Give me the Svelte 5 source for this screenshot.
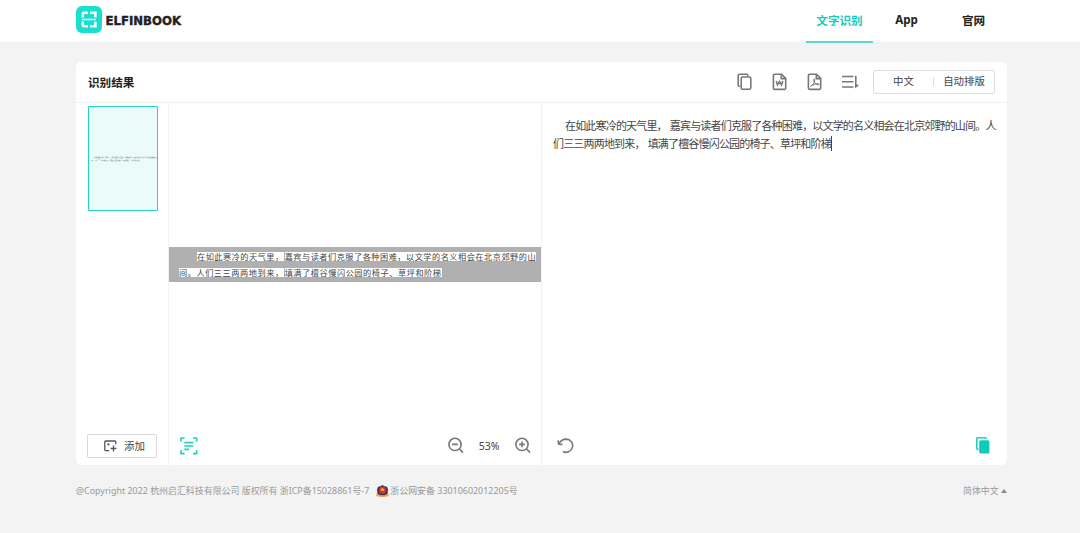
<script lang="ts">
  interface Segment {
    text: string;
    gap: number;
  }

  const tabs = ["文字识别", "App", "官网"];
  let active = $state(0);
  let zoom = $state(53);

  const scanLines: Segment[][] = [
    [
      { text: "在如此寒冷的天气里，", gap: 28 },
      { text: "嘉宾与读者们克服了各种困难，以文学的名义相会在北京郊野的山", gap: 1 },
    ],
    [
      { text: "间。人们三三两两地到来，", gap: 10 },
      { text: "填满了檀谷慢闪公园的椅子、草坪和阶梯", gap: 1 },
    ],
  ];

  const resultLines = [
    ["在如此寒冷的天气里，", "嘉宾与读者们克服了各种困难，以文学的名义相会在北京郊野的山间。人"],
    ["们三三两两地到来，", "填满了檀谷慢闪公园的椅子、草坪和阶梯"],
  ];
</script>

<div class="page">
  <header>
    <div class="brand">
      <svg class="mark" width="26" height="27" viewBox="0 0 26 27">
        <rect width="26" height="27" rx="6" fill="#19dfcf" />
        <g fill="none" stroke="#fff" stroke-width="2.6">
          <path d="M12 6.8H8.2q-1.400 0-1.400 1.400v3.400M14 6.800h5.400v4.400M12 20.200H8.200q-1.400 0-1.400-1.400v-3.400M14 20.200h5.400v-4.400" />
          <path d="M6 13.500h14" stroke-width="1.500" />
        </g>
      </svg>
      <svg class="name" width="78" height="16" viewBox="0 0 78 16">
        <text x="0.5" y="12.500" textLength="75.500" lengthAdjust="spacingAndGlyphs">ELFINBOOK</text>
      </svg>
    </div>
    <nav>
      {#each tabs as tab, i}
        <button class="tab" class:active={active === i} onclick={() => (active = i)}>{tab}</button>
      {/each}
    </nav>
  </header>

  <main>
    <div class="toolbar">
      <h1>识别结果</h1>
      <div class="tools">
        <svg width="16" height="18" viewBox="0 0 16 18">
          <path d="M3 13.300H2.200a1 1 0 0 1-1-1V2.200a1 1 0 0 1 1-1h7.600a1 1 0 0 1 1 1V3" />
          <rect x="4.200" y="4" width="9.600" height="12.200" rx="1.400" />
        </svg>
        <svg width="16" height="18" viewBox="0 0 16 18">
          <path d="M2.800 1.200h6.700l4.200 4.200v9.600a1.400 1.400 0 0 1-1.400 1.400H2.800A1.400 1.400 0 0 1 1.400 15V2.600a1.400 1.400 0 0 1 1.400-1.400zM9.300 1.400v4.200h4.200" />
          <path d="M4.200 8l1.300 3.900 2-3.400 2 3.400L10.900 8" />
        </svg>
        <svg width="16" height="18" viewBox="0 0 16 18">
          <path d="M2.800 1.200h6.700l4.200 4.200v9.600a1.400 1.400 0 0 1-1.400 1.400H2.800A1.400 1.400 0 0 1 1.400 15V2.600a1.400 1.400 0 0 1 1.400-1.400zM9.300 1.400v4.200h4.200" />
          <path class="thin" d="M3.700 13.200c2-.7 4-3.800 4-6.300 0-1.200-1.200-1.100-1 .2.400 2.400 2.400 4.600 4.800 4.700 1 0 .8-1.100-.4-1.100-2.500 0-5.800 1.100-7.400 2.500z" />
        </svg>
        <svg width="18" height="18" viewBox="0 0 18 18">
          <path d="M0 3.500h11.500M0 8.700h11.500M0 14h11.500M13.800 2.800v11.100l2.400-2" />
        </svg>
      </div>
      <div class="options">
        <span class="lang">中文</span>
        <span class="layout">自动排版</span>
      </div>
    </div>

    <div class="body">
      <aside>
        <div class="thumb">
          {#each scanLines as line, i}
            <p class:indent={i === 0}>{line.map(s => s.text).join("")}</p>
          {/each}
        </div>
        <button class="add">
          <svg width="13" height="12" viewBox="0 0 13 12">
            <path d="M5.200 10.700H1.700a.9.9 0 0 1-.9-.9V1.900a.9.9 0 0 1 .9-.9h9.200a.9.9 0 0 1 .9.9v2.300M9.500 5.600v5.800M6.600 8.500h5.800" />
            <circle cx="4.400" cy="4.400" r="1.100" />
          </svg>
          添加
        </button>
      </aside>

      <section class="preview">
        <div class="scan">
          {#each scanLines as line, i}
            <div class="scan-line" class:second={i === 1}>
              {#each line as seg}
                <span style="margin-left: {seg.gap}px">{seg.text}</span>
              {/each}
            </div>
          {/each}
        </div>
        <div class="controls">
          <svg class="teal" width="18" height="18" viewBox="0 0 18 18">
            <path d="M1 4.600V1h3.600M13 1h3.600v3.600M1 13v3.600h3.600M13 16.600h3.600V13M4.300 5.600h9M4.300 9h9M4.300 12.400h4.700" />
          </svg>
          <div class="zoom">
            <svg width="16" height="17" viewBox="0 0 16 17">
              <circle cx="7" cy="7.400" r="6.100" />
              <path d="M4.100 7.400h5.800M11.400 11.800l3.600 3.800" />
            </svg>
            <span>{zoom}%</span>
            <svg width="16" height="17" viewBox="0 0 16 17">
              <circle cx="7" cy="7.400" r="6.100" />
              <path d="M4.100 7.400h5.800M7 4.500v5.800M11.400 11.800l3.600 3.800" />
            </svg>
          </div>
        </div>
      </section>

      <section class="result">
        <div class="text">
          {#each resultLines as line, i}
            <p class:indent={i === 0}>
              <span>{line[0]}</span><span class="rest" class:caret={i === 1}>{line[1]}</span>
            </p>
          {/each}
        </div>
        <div class="controls">
          <svg width="17" height="16" viewBox="0 0 17 16">
            <path d="M2 5.700C3.800 2.600 6.300 1.100 9.200 1.100a6.600 6.600 0 1 1-3.300 12.400" />
            <path d="M1.100 2.400l.5 3.700 3.800.5" />
          </svg>
          <svg class="teal" width="14" height="17" viewBox="0 0 14 17">
            <path d="M2.600 12.400h-.5A1.200 1.200 0 0 1 .8 11.200V1.900A1.200 1.200 0 0 1 2 .7h7a1.200 1.200 0 0 1 1.200 1.200" />
            <rect class="solid" x="3.200" y="3.300" width="10.200" height="13.200" rx="1.500" />
          </svg>
        </div>
      </section>
    </div>
  </main>

  <footer>
    <span class="copyright">@Copyright 2022 杭州启汇科技有限公司 版权所有 浙ICP备15028861号-7</span>
    <svg class="badge" width="13" height="12" viewBox="0 0 13 12">
      <path d="M1 7L0 11Q6.500 13 13 11L12 7z" fill="#e8ac63" />
      <path d="M6.500 0l2 1.200 2.500.5 1 3-.8 4.200-4.700 2.300L1.800 8.900 1 4.700l1-3 2.500-.5z" fill="#33305c" />
      <circle cx="6.500" cy="5.300" r="3.800" fill="#d92e25" />
      <path d="M6.500 2.500l.7 1.200 1.400.2-1 1 .2 1.400-1.300-.6-1.300.6.2-1.400-1-1 1.400-.2z" fill="#f7b24e" />
      <path d="M3.500 9.400q3 1.100 6 0l.3 1.500q-3.300.8-6.600 0z" fill="#e58a4f" />
    </svg>
    <span class="police">浙公网安备 33010602012205号</span>
    <span class="locale">简体中文 <i></i></span>
  </footer>
</div>

<style>
  :global(body) {
    background: #f3f3f3;
  }

  .page {
    height: 533px;
    overflow: hidden;
    font-family: "Noto Sans", "Noto Sans CJK SC", sans-serif;
    color: #444;
  }

  button {
    font: inherit;
    color: inherit;
    background: none;
    border: 0;
    padding: 0;
  }

  p {
    margin: 0;
    white-space: nowrap;
  }

  svg {
    display: block;
    flex: none;
    fill: none;
    stroke: #777;
    stroke-width: 1.6;
  }

  header {
    display: flex;
    justify-content: space-between;
    box-sizing: border-box;
    height: 43px;
    padding: 0 73px 0 76px;
    background: #fff;
    border-bottom: 1px solid #f0f0f0;
  }

  .brand {
    display: flex;
    align-items: center;
    height: 39px;
    gap: 3px;
  }

  .mark,
  .name,
  .badge {
    stroke: none;
  }

  .name text {
    font: 700 11.5px "DejaVu Sans", sans-serif;
    fill: #222;
    stroke: #222;
    stroke-width: 0.4;
  }

  nav {
    display: flex;
  }

  .tab {
    box-sizing: border-box;
    width: 67px;
    height: 43px;
    padding-bottom: 2px;
    font-size: 11.6px;
    font-weight: 700;
    color: #222;
    border-bottom: 2px solid transparent;
  }

  .tab.active {
    color: #13cdbb;
    border-color: #5bd8cc;
  }

  main {
    width: 931px;
    height: 403px;
    margin: 19px 0 0 76px;
    background: #fff;
    border-radius: 5px;
    overflow: hidden;
  }

  .toolbar {
    display: flex;
    align-items: center;
    box-sizing: border-box;
    height: 41px;
    padding: 0 12px;
    border-bottom: 1px solid #f1f1f1;
  }

  h1 {
    margin: 0;
    font-size: 11.6px;
    font-weight: 700;
    color: #222;
  }

  .tools {
    display: flex;
    gap: 19px;
    margin-left: auto;
  }

  .tools .thin {
    stroke-width: 1;
  }

  .options {
    display: flex;
    align-items: center;
    box-sizing: border-box;
    width: 122px;
    height: 24px;
    margin-left: 13px;
    margin-top: -1px;
    border: 1px solid #ddd;
    border-radius: 2px;
    font-size: 10.4px;
    line-height: 9px;
  }

  .lang {
    width: 59px;
    text-align: center;
    border-right: 1px solid #ddd;
  }

  .layout {
    width: 60px;
    text-align: center;
  }

  .body {
    display: flex;
    height: 362px;
  }

  aside {
    display: flex;
    flex-direction: column;
    justify-content: space-between;
    box-sizing: border-box;
    width: 93px;
    padding: 3px 11px 7px;
    border-right: 1px solid #f1f1f1;
  }

  .thumb {
    box-sizing: border-box;
    width: 70px;
    height: 105px;
    margin-left: 1px;
    padding: 49px 2px 0;
    background: #eafbfa;
    border: 1px solid #21d3c4;
    border-radius: 1px;
    overflow: hidden;
  }

  .thumb p {
    font-size: 1.61px;
    line-height: 3px;
    color: #555;
  }

  .thumb .indent {
    padding-left: 3px;
  }

  .add {
    display: flex;
    align-items: center;
    box-sizing: border-box;
    width: 70px;
    height: 24px;
    padding: 0 0 1px 16px;
    gap: 7px;
    font-size: 10.5px;
    border: 1px solid #d9d9d9;
    border-radius: 2px;
  }

  .add svg {
    stroke: #555;
    stroke-width: 1.3;
    margin-top: 1px;
  }

  .add circle {
    fill: #555;
    stroke: none;
  }

  .preview,
  .result {
    display: flex;
    flex-direction: column;
    justify-content: space-between;
    box-sizing: border-box;
  }

  .preview {
    width: 373px;
    padding-top: 144px;
    border-right: 1px solid #f1f1f1;
  }

  .scan {
    box-sizing: border-box;
    height: 35px;
    padding-top: 5px;
    background: #b0b0b0;
    overflow: hidden;
  }

  .scan-line {
    display: flex;
    height: 16px;
  }

  .scan-line span {
    height: 9px;
    background: #fff;
    font-size: 8.2px;
    line-height: 9px;
    letter-spacing: 0.48px;
    white-space: nowrap;
    color: #444;
  }

  .scan-line.second span {
    letter-spacing: 0.53px;
  }

  .controls {
    display: flex;
    align-items: center;
    justify-content: space-between;
    height: 39px;
  }

  .preview .controls {
    padding: 0 10px 0 11px;
  }

  .result .controls {
    padding: 0 17px 0 15px;
  }

  .zoom {
    display: flex;
    align-items: center;
    font-size: 10.5px;
  }

  .zoom span {
    width: 51px;
    text-align: center;
    text-indent: -1px;
  }

  .teal {
    stroke: #20cfc0;
  }

  .teal .solid {
    fill: #10cbb9;
    stroke: none;
  }

  .result {
    flex: 1;
    padding-top: 14px;
  }

  .text {
    padding-left: 11px;
    font-size: 11px;
    line-height: 17.5px;
    letter-spacing: -0.82px;
    color: #444;
  }

  .text .indent {
    padding-left: 12px;
  }

  .rest {
    margin-left: 3px;
  }

  .caret {
    border-right: 1px solid #444;
  }

  footer {
    display: flex;
    align-items: center;
    height: 14px;
    margin: 19px 73px 0 76px;
    font-size: 8.94px;
    line-height: 14px;
    white-space: nowrap;
    color: #999;
  }

  .badge {
    margin: 0 1px 0 7px;
  }

  .locale {
    margin-left: auto;
  }

  .locale i {
    display: inline-block;
    border: 3px solid transparent;
    border-top: 0;
    border-bottom: 4px solid #888;
    vertical-align: 1px;
  }
</style>
